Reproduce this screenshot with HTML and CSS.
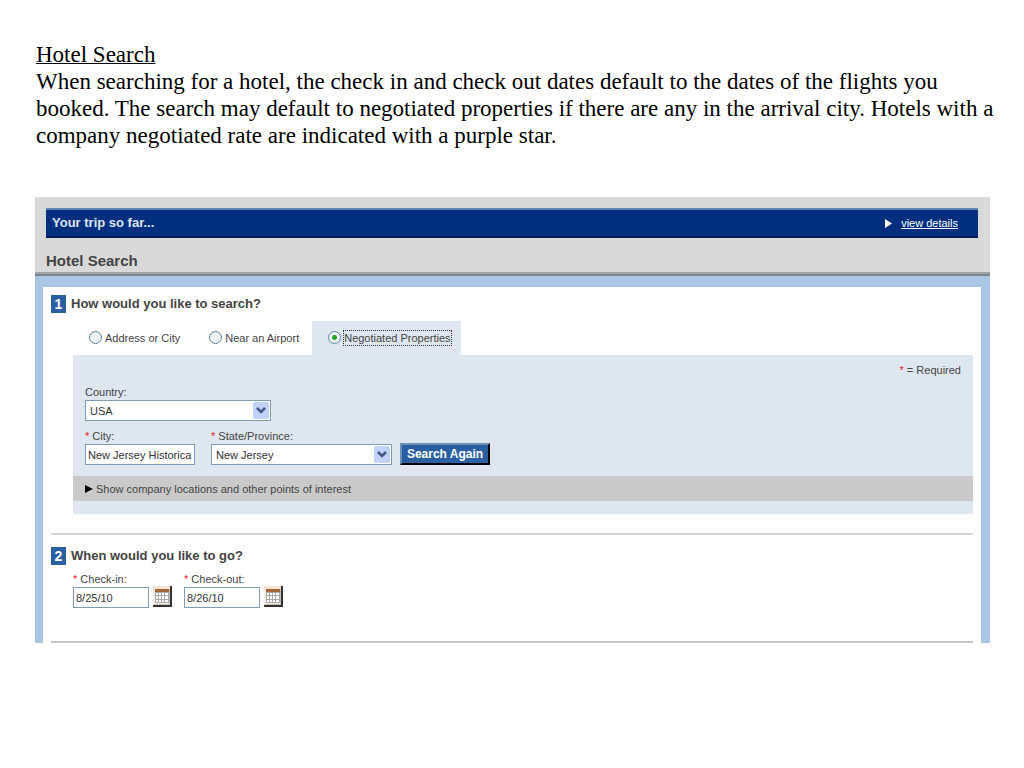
FILE: index.html
```
<!DOCTYPE html>
<html lang="en">
<head>
    <meta charset="UTF-8">
    <meta name="viewport" content="width=device-width, initial-scale=1.0">
    <title>Hotel Search</title>
    <link rel="stylesheet" href="styles.css">
</head>
<body>
<header class="intro">
    <h1>Hotel Search</h1>
    <p>When searching for a hotel, the check in and check out dates default to the dates of the flights you booked. The search may default to negotiated properties if there are any in the arrival city. Hotels with a company negotiated rate are indicated with a purple star.</p>
</header>

<main class="booking">
    <div class="booking-top">
        <div class="trip-bar">
            <span class="trip-title">Your trip so far...</span>
            <a class="details" href="#">
                <svg width="7" height="9" viewBox="0 0 7 9"><path d="M0 0L7 4.500L0 9Z" fill="#fff"/></svg>
                <span>view details</span>
            </a>
        </div>
        <h2>Hotel Search</h2>
    </div>

    <form class="booking-body">
        <section>
            <h3><span class="step">1</span>How would you like to search?</h3>
            <div class="tabs">
                <label class="tab"><input type="radio" name="mode"><span>Address or City</span></label>
                <label class="tab"><input type="radio" name="mode"><span>Near an Airport</span></label>
                <label class="tab active"><input type="radio" name="mode" checked><span>Negotiated Properties</span></label>
            </div>
            <div class="panel">
                <p class="required"><b>*</b> = Required</p>
                <div class="row">
                    <div class="field">
                        <label for="country">Country:</label>
                        <div class="select country">
                            <select id="country"><option>USA</option></select>
                            <span class="arrow"><svg width="10" height="7" viewBox="0 0 10 7"><path d="M1 1L5 5L9 1" fill="none" stroke="#44597f" stroke-width="2.500"/></svg></span>
                        </div>
                    </div>
                </div>
                <div class="row second">
                    <div class="field">
                        <label for="city"><b>*</b> City:</label>
                        <input class="city" id="city" type="text" value="New Jersey Historica">
                    </div>
                    <div class="field">
                        <label for="state"><b>*</b> State/Province:</label>
                        <div class="select">
                            <select id="state"><option>New Jersey</option></select>
                            <span class="arrow"><svg width="10" height="7" viewBox="0 0 10 7"><path d="M1 1L5 5L9 1" fill="none" stroke="#44597f" stroke-width="2.500"/></svg></span>
                        </div>
                    </div>
                    <button class="search" type="button">Search Again</button>
                </div>
                <button class="more" type="button">
                    <svg width="8" height="8" viewBox="0 0 8 8"><path d="M0 0L8 4L0 8Z" fill="#000"/></svg>
                    Show company locations and other points of interest
                </button>
            </div>
        </section>

        <section class="dates-section">
            <h3><span class="step">2</span>When would you like to go?</h3>
            <div class="dates">
                <div class="field">
                    <label for="checkin"><b>*</b> Check-in:</label>
                    <input class="date" id="checkin" type="text" value="8/25/10">
                </div>
                <button class="calendar" type="button" aria-label="Pick check-in date">
                    <svg width="19" height="21" viewBox="0 0 19 21">
                        <path d="M0 0H19V21H0Z" fill="#f4efe9"/>
                        <path d="M0 0H19V3H0Z" fill="#fbe3d2"/>
                        <path d="M2 3H16V6H2Z" fill="#a5633a"/>
                        <path d="M2 6H16V17H2Z" fill="#aaa"/>
                        <path d="M3 7h2v2h-2zM6 7h2v2h-2zM9 7h2v2h-2zM12 7h3v2h-3zM3 10h2v3h-2zM6 10h2v3h-2zM9 10h2v3h-2zM12 10h3v3h-3zM3 14h2v2h-2zM6 14h2v2h-2zM9 14h2v2h-2zM12 14h3v2h-3z" fill="#fff"/>
                        <path d="M18 0V20H0" fill="none" stroke="#333" stroke-width="2"/>
                        <path d="M16.500 3V18.500H1" fill="none" stroke="#c9c0b5"/>
                    </svg>
                </button>
                <div class="field">
                    <label for="checkout"><b>*</b> Check-out:</label>
                    <input class="date" id="checkout" type="text" value="8/26/10">
                </div>
                <button class="calendar" type="button" aria-label="Pick check-out date">
                    <svg width="19" height="21" viewBox="0 0 19 21">
                        <path d="M0 0H19V21H0Z" fill="#f4efe9"/>
                        <path d="M0 0H19V3H0Z" fill="#fbe3d2"/>
                        <path d="M2 3H16V6H2Z" fill="#a5633a"/>
                        <path d="M2 6H16V17H2Z" fill="#aaa"/>
                        <path d="M3 7h2v2h-2zM6 7h2v2h-2zM9 7h2v2h-2zM12 7h3v2h-3zM3 10h2v3h-2zM6 10h2v3h-2zM9 10h2v3h-2zM12 10h3v3h-3zM3 14h2v2h-2zM6 14h2v2h-2zM9 14h2v2h-2zM12 14h3v2h-3z" fill="#fff"/>
                        <path d="M18 0V20H0" fill="none" stroke="#333" stroke-width="2"/>
                        <path d="M16.500 3V18.500H1" fill="none" stroke="#c9c0b5"/>
                    </svg>
                </button>
            </div>
        </section>
    </form>
</main>
</body>
</html>
```
FILE: styles.css
```
* {
    box-sizing: border-box;
}
body {
    margin: 0;
    padding: 41px 0 40px;
    background-color: #fff;
    color: #444;
    font-family: "Liberation Sans", Arial, sans-serif;
    font-size: 11px;
    line-height: 14px;
}
h1, h2, h3, p {
    margin: 0;
}
input, select, button {
    font-family: inherit;
    font-size: 11px;
    color: #333;
}
svg {
    display: block;
}

/* description above the form */
.intro {
    color: #000;
    font-family: "Liberation Serif", "Times New Roman", serif;
    font-size: 23px;
    line-height: 27px;
    padding: 0 24px 0 36px;
    margin-bottom: 48px;
}
.intro h1 {
    font-size: 23px;
    font-weight: normal;
    text-decoration: underline;
    text-decoration-thickness: 1px;
}

.booking {
    margin: 0 34px 0 35px;
}

/* grey top with the trip bar */
.booking-top {
    background-color: #d9d9d9;
    padding: 11px 12px 0 11px;
    border-bottom: 2px solid #7c868f;
}
.trip-bar {
    display: flex;
    align-items: center;
    justify-content: space-between;
    height: 30px;
    padding: 0 20px 0 6px;
    background-color: #002f7f;
    border-top: 2px solid #5f86b0;
    border-bottom: 2px solid #001a55;
    color: #fff;
}
.trip-title {
    font-size: 13px;
    font-weight: bold;
    color: #dde5f0;
}
.details {
    display: flex;
    align-items: center;
    gap: 9px;
    color: #fff;
    text-decoration: none;
}
.details span {
    text-decoration: underline;
}
.booking-top h2 {
    margin: 0 -12px 0 -11px;
    padding: 14px 11px 2px;
    border-bottom: 2px solid #a3a3a3;
    font-size: 15px;
    line-height: 18px;
}

/* white form on the blue frame */
.booking-body {
    border: solid #a9c6e5;
    border-width: 11px 9px 0 8px;
    padding: 8px 8px 0;
}
h3 {
    display: flex;
    align-items: center;
    gap: 5px;
    font-size: 13px;
    line-height: 18px;
}
.step {
    width: 15px;
    height: 18px;
    background-color: #2a60a3;
    color: #fff;
    font-size: 14px;
    text-align: center;
}
.tabs {
    display: flex;
    margin: 8px 0 0 22px;
}
.tab {
    display: flex;
    align-items: center;
    gap: 2px;
    height: 34px;
    padding: 0 13px 0 16px;
}
.tab.active {
    padding-right: 10px;
    background-color: #dee6ef;
}
.tab.active span {
    outline: 1px dotted #333;
}
input[type="radio"] {
    appearance: none;
    width: 13px;
    height: 13px;
    margin: 0 1px 2px 0;
    border: 1px solid #5b7f9f;
    border-radius: 50%;
    background-color: #f0f3f7;
}
input[type="radio"]:checked {
    background: radial-gradient(circle, #2ea02a 0 2px, #f5f8f5 3px);
}
.panel {
    margin-left: 22px;
    padding-bottom: 13px;
    background-color: #dee6ef;
}
.required {
    padding: 8px 12px 8px;
    text-align: right;
}
b {
    color: #d22;
    font-weight: normal;
}
.row {
    display: flex;
    align-items: flex-end;
    padding: 0 12px;
}
.second {
    gap: 16px;
    margin-top: 8px;
}
.field label {
    display: block;
    height: 15px;
}
input[type="text"] {
    display: block;
    height: 21px;
    padding: 0 2px;
    border: 1px solid #7f9db9;
    background-color: #fff;
}
.city {
    width: 110px;
}
.select {
    display: grid;
    width: 181px;
    height: 21px;
}
.country {
    width: 186px;
}
.select select, .arrow {
    grid-area: 1 / 1;
}
.select select {
    appearance: none;
    padding: 0 4px;
    border: 1px solid #7f9db9;
    border-radius: 0;
    background-color: #fff;
}
.arrow {
    display: flex;
    align-items: center;
    justify-content: center;
    justify-self: end;
    width: 16px;
    margin: 2px;
    border-radius: 2px;
    background-color: #c1d2fb;
    pointer-events: none;
}
.search {
    width: 90px;
    height: 22px;
    margin-left: -8px;
    padding: 0;
    border: 2px solid #000;
    border-top-color: #6c91b7;
    border-left-color: #6c91b7;
    background-color: #2a60a3;
    color: #fff;
    font-size: 12px;
    font-weight: bold;
}
.more {
    display: flex;
    align-items: center;
    gap: 3px;
    width: 100%;
    height: 25px;
    margin-top: 11px;
    padding: 0 12px;
    border: 0;
    background-color: #cacaca;
    color: #444;
}

/* check-in and check-out */
.dates-section {
    margin-top: 19px;
    padding: 12px 0 33px;
    border-top: 2px solid #d4d4d8;
    border-bottom: 2px solid #c4c4ca;
}
.dates {
    display: flex;
    align-items: flex-end;
    margin: 7px 0 0 22px;
}
.date {
    width: 76px;
}
.calendar {
    margin: 0 12px 1px 4px;
    padding: 0;
    border: 0;
    background: none;
}
```
